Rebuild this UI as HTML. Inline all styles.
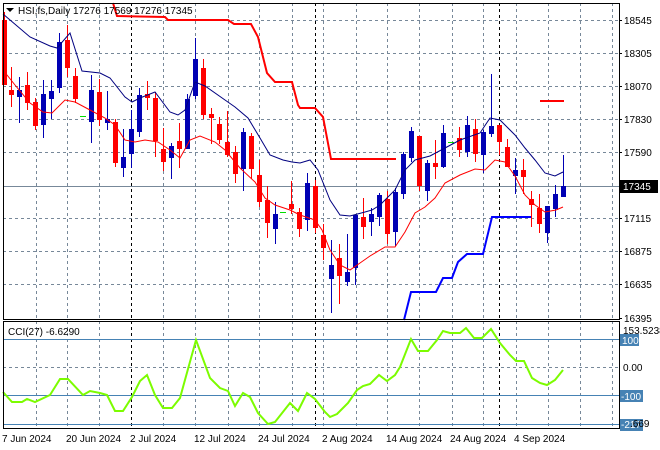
<!DOCTYPE html>
<html><head><meta charset="utf-8"><style>
html,body{margin:0;padding:0;background:#fff;}
svg{display:block;font-family:"Liberation Sans",sans-serif;font-size:10px;}
</style></head><body>
<svg id="s" width="660" height="450" viewBox="0 0 660 450" xmlns="http://www.w3.org/2000/svg">
<rect width="660" height="450" fill="#fff"/>
<g id="grid" stroke="#778899" stroke-width="1" stroke-dasharray="3,3" fill="none"></g>
<g id="vlines" stroke="#000" stroke-width="1" stroke-dasharray="3,3" fill="none">
<line x1="131.5" y1="3" x2="131.5" y2="428"/><line x1="315.5" y1="3" x2="315.5" y2="428"/><line x1="499.5" y1="3" x2="499.5" y2="428"/>
</g>
<line x1="3" y1="186.5" x2="619" y2="186.5" stroke="#778899" stroke-width="1"/>
<!-- CCI levels -->
<line x1="3" y1="339.5" x2="619" y2="339.5" stroke="#4682B4"/>
<line x1="3" y1="395.5" x2="619" y2="395.5" stroke="#4682B4"/>
<line x1="3" y1="424.5" x2="619" y2="424.5" stroke="#4682B4"/>
<line x1="3" y1="367.5" x2="619" y2="367.5" stroke="#778899" stroke-dasharray="3,3"/>
<g id="candles"></g>
<polyline fill="none" stroke="#000080" stroke-width="1" points="3,14 30,37 50,46 57,48 70,33 82,71 100,73 110,78 125,97 132,102 140,98 155,92 170,112 178,115 185,110 195,82 205,86 225,100 235,107 248,118 260,138 270,155 283,160 292,162 300,163 310,160 318,170 330,200 340,215 350,216 365,212 372,210 380,205 395,190 405,170 415,160 430,156 445,148 460,140 480,133 490,118 500,120 515,135 525,148 535,160 545,173 555,176 563,172"/>
<polyline fill="none" stroke="#ff0000" stroke-width="1" points="3,70 15,85 30,103 43,112 52,113 65,100 75,102 90,110 105,118 115,125 125,140 135,142 145,140 158,142 170,150 180,158 190,140 200,136 215,142 225,150 240,168 255,182 265,198 275,205 290,210 300,215 315,220 322,230 330,250 340,265 350,270 360,263 370,256 385,247 395,247 405,232 415,213 425,207 435,198 445,183 460,175 475,169 485,170 495,160 505,162 515,176 525,195 535,205 545,212 556,210 563,207"/>
<polyline fill="none" stroke="#ff0000" stroke-width="2" points="113,3 117,16 165,17 168,20 228,20 234,24 251,24 258,37 267,73 275,82 292,82 298,105 300,108 315,108 323,117 331,159 396,159"/>
<line x1="540" y1="101" x2="564" y2="101" stroke="#ff0000" stroke-width="2"/>
<polyline fill="none" stroke="#0000ff" stroke-width="2" points="404,320 411,292 436,292 443,278 452,278 458,262 467,254 483,254 492,217 531,217"/>
<polyline fill="none" stroke="#7cfc00" stroke-width="2" points="3,392 12,402 22,402 27,399 35,402 50,395 60,379 68,379 83,395 90,391 100,393 107,395 115,411 123,411 132,397 140,381 147,375 155,395 163,408 172,408 180,398 196,340 210,378 220,388 228,391 235,406 243,393 250,397 258,413 268,424 275,422 290,403 298,411 307,393 315,399 325,412 330,417 337,414 348,403 357,390 363,386 370,384 379,375 387,381 395,375 400,367 411,339 418,351 428,351 437,340 443,331 450,333 460,333 466,328 474,338 482,338 491,329 500,343 510,355 516,361 524,361 532,378 540,383 547,385 555,380 563,370"/>
<!-- frames -->
<rect x="3.5" y="3.5" width="616" height="316" fill="none" stroke="#000"/>
<rect x="3.5" y="321.5" width="616" height="107" fill="none" stroke="#000"/>
<!-- header -->
<polygon points="6,8 14,8 10,12" fill="#000"/>
<text x="18" y="14" fill="#000">HSI,fs,Daily  17276 17569 17276 17345</text>
<text x="8" y="335" fill="#000">CCI(27) -6.6290</text>
<g id="axis" fill="#000"></g>
<rect x="620" y="180" width="38" height="13" fill="#000"/>
<text x="623" y="190" fill="#fff">17345</text>
<text x="623" y="334" fill="#000">153.5238</text>
<rect x="620" y="334" width="19" height="12" fill="#4682B4"/><text x="622" y="344" fill="#fff">100</text>
<text x="623" y="371" fill="#000">0.00</text>
<rect x="620" y="390" width="23" height="12" fill="#4682B4"/><text x="621" y="400" fill="#fff">-100</text>
<rect x="620" y="419" width="23" height="12" fill="#4682B4"/><text x="621" y="428" fill="#fff">-217</text>
<text x="630" y="427" fill="#000">.669</text>
<g fill="#000">
<text x="2" y="442">7 Jun 2024</text><text x="66" y="442">20 Jun 2024</text><text x="130" y="442">2 Jul 2024</text>
<text x="194" y="442">12 Jul 2024</text><text x="258" y="442">24 Jul 2024</text><text x="322" y="442">2 Aug 2024</text>
<text x="386" y="442">14 Aug 2024</text><text x="450" y="442">24 Aug 2024</text><text x="514" y="442">4 Sep 2024</text>
</g>
</svg>
<script>
var NS="http://www.w3.org/2000/svg";
function el(p,t,a){var e=document.createElementNS(NS,t);for(var k in a)e.setAttribute(k,a[k]);p.appendChild(e);return e;}
var g=document.getElementById('grid');
[20,53,86,119,152,218,251,284].forEach(function(y){el(g,'line',{x1:3,x2:619,y1:y+.5,y2:y+.5});});
[36,67,99,163,195,228,259,292,323,356,387,419,452,483,516,548,580,612].forEach(function(x){el(g,'line',{x1:x+.5,x2:x+.5,y1:3,y2:428});});
var ax=document.getElementById('axis');
[[18545,20],[18305,53],[18070,86],[17830,119],[17590,152],[17115,218],[16875,251],[16635,284],[16395,318]].forEach(function(a){
 el(ax,'line',{x1:619,x2:622,y1:a[1]+.5,y2:a[1]+.5,stroke:'#000'});
 var t=el(ax,'text',{x:624,y:a[1]+4});t.textContent=a[0];});
// candles: x, bodyTop, bodyBot, wickTop, wickBot, color
var C=[[4,20,85,12,85,'r'],[11,90,95,67,107,'r'],[19,90,97,77,123,'b'],[27,85,103,72,110,'r'],[35,102,126,98,130,'r'],[43,94,125,80,138,'b'],[51,91,99,80,119,'b'],[59,42,88,33,93,'b'],[67,40,68,25,77,'r'],[75,76,99,68,103,'r'],[83,116,116,116,116,'g'],[91,90,122,75,143,'b'],[99,92,120,79,126,'r'],[107,119,123,91,130,'b'],[115,122,163,119,167,'r'],[123,157,168,129,177,'b'],[131,129,154,110,168,'b'],[139,95,132,88,137,'b'],[147,94,98,81,110,'r'],[155,98,141,92,157,'r'],[163,149,162,128,171,'r'],[171,146,158,143,179,'b'],[179,141,149,123,168,'r'],[187,99,149,94,149,'b'],[195,59,96,38,99,'b'],[203,68,115,59,119,'r'],[211,114,118,108,144,'r'],[219,124,140,117,144,'r'],[227,142,155,111,157,'r'],[235,152,174,146,183,'r'],[243,132,169,128,191,'b'],[251,136,169,133,179,'r'],[259,175,202,160,207,'r'],[267,200,223,186,238,'r'],[275,214,229,202,244,'b'],[283,212,212,212,212,'g'],[291,204,209,181,214,'r'],[299,212,229,208,237,'r'],[307,183,220,173,231,'b'],[315,186,228,180,233,'r'],[323,235,248,224,260,'r'],[331,265,279,240,313,'b'],[339,258,276,244,304,'r'],[347,272,282,234,286,'b'],[355,215,268,215,285,'b'],[363,217,227,198,239,'r'],[371,214,222,208,236,'b'],[379,195,217,193,226,'b'],[387,199,234,191,244,'r'],[395,192,232,188,246,'b'],[403,154,194,152,199,'b'],[411,131,158,127,162,'b'],[419,136,186,136,191,'r'],[427,163,191,160,201,'b'],[435,163,167,140,179,'r'],[443,133,167,125,168,'b'],[451,142,142,142,142,'g'],[459,138,150,127,157,'r'],[467,125,152,116,157,'b'],[475,129,154,119,162,'r'],[483,132,155,130,173,'b'],[491,126,134,74,137,'b'],[499,125,142,125,155,'r'],[507,147,167,139,167,'r'],[515,170,176,158,194,'b'],[523,170,177,159,194,'r'],[531,199,205,191,227,'r'],[539,208,224,194,233,'r'],[547,206,233,206,243,'b'],[555,194,209,185,217,'b'],[563,186,197,155,197,'b']];
var cg=document.getElementById('candles');
C.forEach(function(c){
 if(c[5]=='g'){el(cg,'line',{x1:c[0]-3,x2:c[0]+3,y1:c[1]+.5,y2:c[1]+.5,stroke:'#00dd00'});return;}
 var col=c[5]=='r'?'#ff0000':'#0000b4';
 el(cg,'line',{x1:c[0]+.5,x2:c[0]+.5,y1:c[3],y2:c[4],stroke:col});
 el(cg,'rect',{x:c[0]-2,y:c[1],width:5,height:Math.max(1,c[2]-c[1]),fill:col});
});
</script>
</body></html>
